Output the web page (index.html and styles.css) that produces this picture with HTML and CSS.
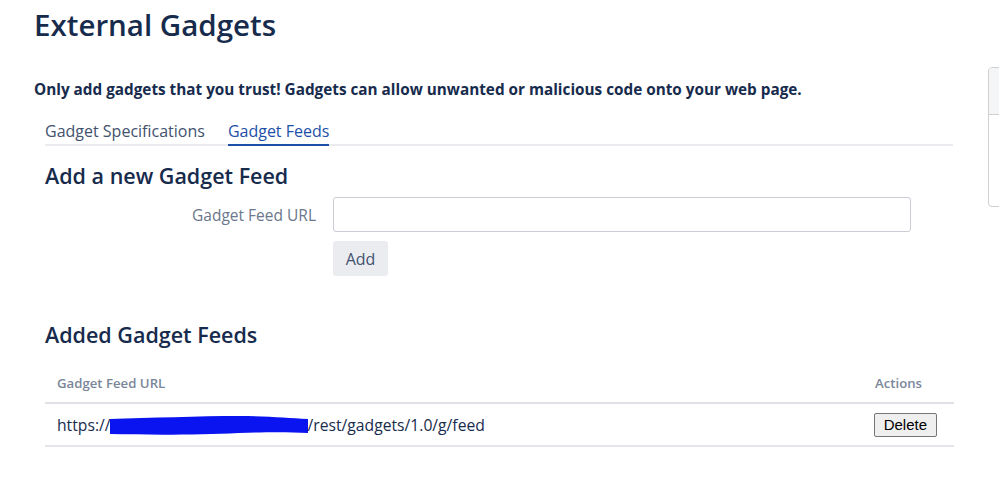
FILE: index.html
```html
<!DOCTYPE html>
<html>
<head>
<meta charset="utf-8">
<link rel="stylesheet" href="styles.css">
</head>
<body>
<div class="page">
  <h1 class="title">External Gadgets</h1>
  <p class="warning">Only add gadgets that you trust! Gadgets can allow unwanted or malicious code onto your web page.</p>
  <div class="content">
    <nav class="tabs">
      <span class="tab">Gadget Specifications</span>
      <span class="tab active">Gadget Feeds</span>
    </nav>
    <h2 class="section-title">Add a new Gadget Feed</h2>
    <form class="form">
      <div class="field">
        <label class="label">Gadget Feed URL</label>
        <input class="input" type="text">
      </div>
      <div class="field">
        <span class="label"></span>
        <button class="add-btn" type="button">Add</button>
      </div>
    </form>
    <h2 class="section-title added">Added Gadget Feeds</h2>
    <table class="table">
      <thead>
        <tr><th class="col-url">Gadget Feed URL</th><th class="col-actions">Actions</th></tr>
      </thead>
      <tbody>
        <tr>
          <td class="col-url">https://<span class="redact"><svg width="198" height="20" viewBox="0 0 200 20" preserveAspectRatio="none"><path d="M0 3 C40 2 90 0 130 0 C160 0 180 2 200 3 L200 17 C180 16 160 16 130 17 C90 19 40 19 0 18 Z" fill="#0a14f0"/></svg></span>/rest/gadgets/1.0/g/feed</td>
          <td class="col-actions"><button class="delete-btn" type="button">Delete</button></td>
        </tr>
      </tbody>
    </table>
  </div>
</div>
<div class="side-panel"><div class="side-head"></div></div>
</body>
</html>
```
FILE: styles.css
```css
html, body { margin: 0; padding: 0; background: #fff; }
body { font-family: "Open Sans", "Noto Sans", sans-serif; color: #172b4d; }
.page { padding: 0 46px 0 34px; }
.title { font-size: 29.5px; font-weight: 600; margin: 0; padding-top: 4px; line-height: 42px; color: #172b4d; }
.warning { font-size: 15.3px; font-weight: 700; margin: 32px 0 0; line-height: 22px; color: #172b4d; }
.content { padding-left: 11px; }
.tabs { display: flex; gap: 23px; border-bottom: 2px solid #ebecf0; margin-top: 21px; }
.tab { font-size: 16px; color: #42526e; line-height: 20px; padding: 0 0 3px; margin-bottom: -2px; }
.tab.active { color: #1e4fa8; border-bottom: 2px solid #1e4fa8; }
.section-title { font-size: 21.5px; font-weight: 600; margin: 15px 0 0; line-height: 30px; color: #172b4d; }
.form { display: flex; flex-direction: column; gap: 9px; margin-top: 6px; }
.field { display: flex; align-items: center; gap: 17px; }
.label { width: 271px; text-align: right; font-size: 15.5px; color: #6b778c; }
.input { width: 578px; height: 35px; box-sizing: border-box; border: 1px solid #c9ccd3; border-radius: 3px; margin: 0; }
.add-btn { width: 55px; height: 35px; border: 0; border-radius: 3px; background: #ebecf0; color: #42526e; font-family: inherit; font-size: 16px; padding: 0; }
.section-title.added { margin-top: 44px; }
.table { width: 909px; border-collapse: collapse; margin-top: 23px; }
.table th { font-size: 13.2px; font-weight: 600; color: #7a869a; text-align: left; padding: 0 12px; height: 29px; vertical-align: top; line-height: 20px; border-bottom: 2px solid #dfe1e6; }
.table th.col-actions { text-align: right; padding-right: 32px; }
.table td { font-size: 15.7px; color: #172b4d; padding: 0 12px; height: 41px; border-bottom: 2px solid #e4e5e8; }
.table td.col-actions { text-align: right; padding-right: 17px; }
.redact { display: inline-block; width: 198px; height: 20px; vertical-align: -5px; margin-left: -1px; }
.redact svg { display: block; }
.delete-btn { font-family: Arial, "Liberation Sans", sans-serif; font-size: 15px; background: #efefef; border: 1px solid #767676; border-radius: 2px; padding: 1px 9px; height: 24px; color: #000; }
.side-panel { position: absolute; left: 988px; top: 67px; width: 20px; height: 140px; border: 1px solid #d0d0d0; border-radius: 4px; box-sizing: border-box; background: #fff; overflow: hidden; }
.side-head { height: 46px; background: #f4f5f7; border-bottom: 1px solid #d0d0d0; }
```
